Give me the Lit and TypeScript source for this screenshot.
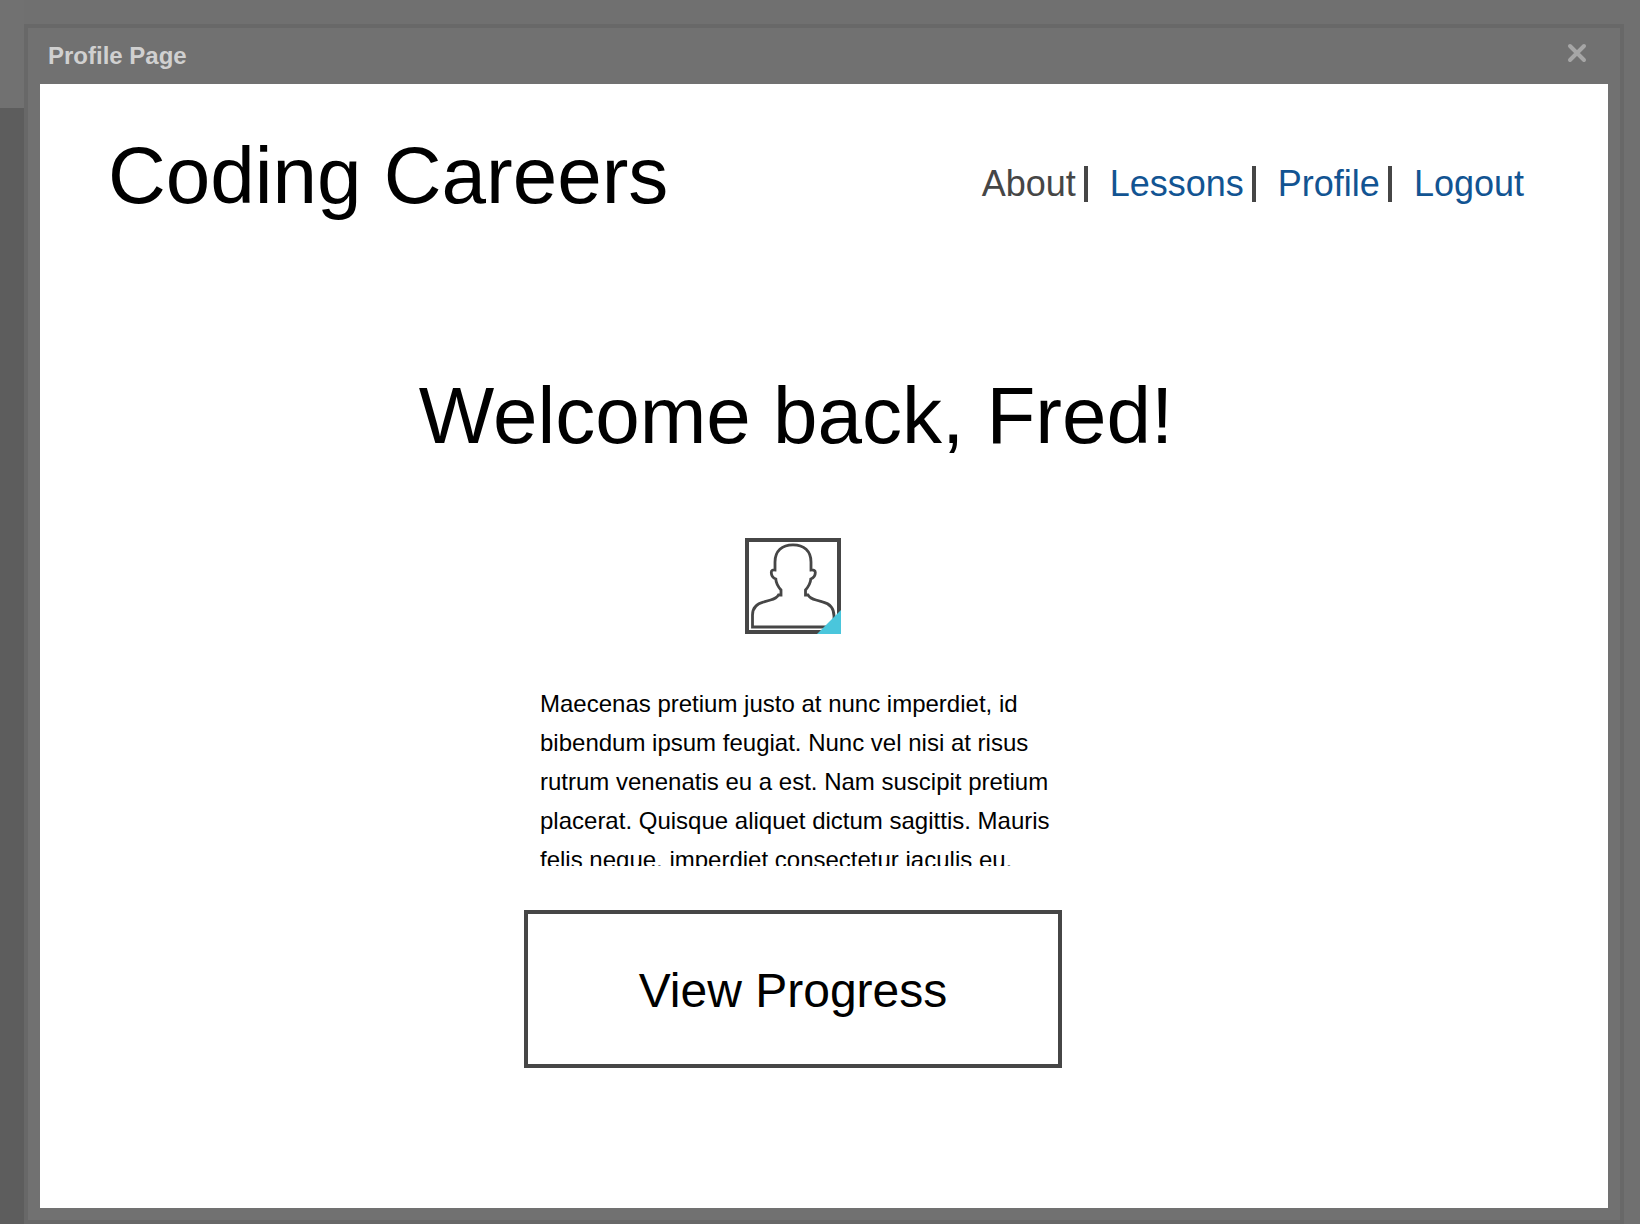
import { LitElement, html, css } from "lit";
import { customElement, property } from "lit/decorators.js";

@customElement("user-avatar")
class UserAvatar extends LitElement {
  static styles = css`
    :host { display: block; width: 96px; height: 96px; }
    .art { display: block; width: 100%; height: 100%; }
  `;

  render() {
    return html`
      <svg class="art" viewBox="0 0 96 96" role="img" aria-label="Avatar">
        <rect x="2" y="2" width="92" height="92" fill="#fff" stroke="#464646" stroke-width="4" />
        <path
          d="M7.5 89V77C7.5 70 12 65.500 19 63.800L25.500 62C29.500 61 32 59.500 33.500 57H36V52C32.500 48 31 45 30.800 41C28 40 26.300 37.500 26.300 34.500C26.300 32.500 27.500 31.800 30 32V24C30 13 37 6.800 48 6.800S66 13 66 24V32C69 31.800 70.300 32.500 70.300 34.500C70.300 37.500 68.500 40 65.800 41C65.500 45 64 48 60.500 52V57H63C64.500 59.500 67 61 71 62L77.500 63.800C84.500 65.500 89 70 89 78V89Z"
          fill="#fff" stroke="#464646" stroke-width="2.800" />
        <path d="M96 72V96H72Z" fill="#4ac6dc" />
      </svg>
    `;
  }
}

@customElement("site-nav")
class SiteNav extends LitElement {
  @property() current = "About";
  private links = ["About", "Lessons", "Profile", "Logout"];

  static styles = css`
    :host { display: block; }
    .list { display: flex; align-items: center; margin: 0; padding: 0; list-style: none; }
    .item { display: flex; align-items: center; gap: 8px; }
    .item + .item { padding-left: 22px; }
    .item:not(:last-child)::after { content: ""; width: 4px; height: 36px; background: #464646; }
    .link { color: #125492; font-size: 36px; line-height: 40px; text-decoration: none; }
    .current { color: #464646; }
  `;

  render() {
    return html`
      <nav aria-label="Main">
        <ul class="list">
          ${this.links.map(
            (name) => html`<li class="item">
              <a class="link ${name === this.current ? "current" : ""}" href="#${name.toLowerCase()}">${name}</a>
            </li>`
          )}
        </ul>
      </nav>
    `;
  }
}

@customElement("app-root")
class AppRoot extends LitElement {
  static styles = css`
    :host {
      display: block;
      box-sizing: border-box;
      min-height: 100vh;
      padding: 24px 16px 0 24px;
      background: linear-gradient(#717171 108px, #5d5d5d 108px) left / 24px 100% no-repeat, #707070;
      font-family: "Liberation Sans", Arial, sans-serif;
      color: #000;
    }
    * { box-sizing: border-box; }
    .dialog {
      display: flex;
      flex-direction: column;
      min-height: calc(100vh - 24px);
      border: 4px solid #686868;
      padding: 0 12px 12px;
      background: #717171;
    }
    .bar { display: flex; align-items: center; justify-content: space-between; height: 56px; padding: 0 21px 0 8px; }
    .title { margin: 0; font-size: 24px; line-height: 28px; font-weight: bold; color: #d0d0d0; }
    .close { display: flex; padding: 0; border: 0; background: none; }
    .cross { display: block; width: 20px; height: 20px; margin-bottom: 6px; }
    .page { flex: 1; padding: 46px 84px 0 68px; background: #fff; }
    .head { display: flex; align-items: center; justify-content: space-between; }
    .menu { padding-top: 16px; }
    .brand, .welcome { margin: 0; font-size: 80px; line-height: 92px; font-weight: normal; }
    .hero { padding: 148px 40px 76px 0; text-align: center; }
    .profile { display: flex; flex-direction: column; align-items: center; padding-right: 46px; }
    .bio { width: 538px; height: 182px; margin: 50px 0 44px; padding: 0 12px 0 16px; overflow: hidden; font-size: 24px; line-height: 39px; }
    .progress { width: 538px; height: 158px; margin: 0 0 44px; padding: 4px 0 0; border: 4px solid #464646; background: #fff; color: #000; font: 48px/56px "Liberation Sans", Arial, sans-serif; }
  `;

  render() {
    return html`
      <section class="dialog" role="dialog" aria-labelledby="title">
        <div class="bar">
          <h2 class="title" id="title">Profile Page</h2>
          <button class="close" type="button" aria-label="Close">
            <svg class="cross" viewBox="0 0 20 20" aria-hidden="true">
              <path d="M3 3L17 17M17 3L3 17" stroke="#a6a6a6" stroke-width="4" stroke-linecap="round" />
            </svg>
          </button>
        </div>
        <div class="page">
          <header class="head">
            <h1 class="brand">Coding Careers</h1>
            <site-nav class="menu"></site-nav>
          </header>
          <main>
            <div class="hero">
              <h2 class="welcome">Welcome back, Fred!</h2>
            </div>
            <div class="profile">
              <user-avatar></user-avatar>
              <p class="bio">
                Maecenas pretium justo at nunc imperdiet, id bibendum ipsum feugiat. Nunc vel nisi at risus rutrum
                venenatis eu a est. Nam suscipit pretium placerat. Quisque aliquet dictum sagittis. Mauris felis neque,
                imperdiet consectetur iaculis eu,
              </p>
              <button class="progress" type="button">View Progress</button>
            </div>
          </main>
        </div>
      </section>
    `;
  }
}
